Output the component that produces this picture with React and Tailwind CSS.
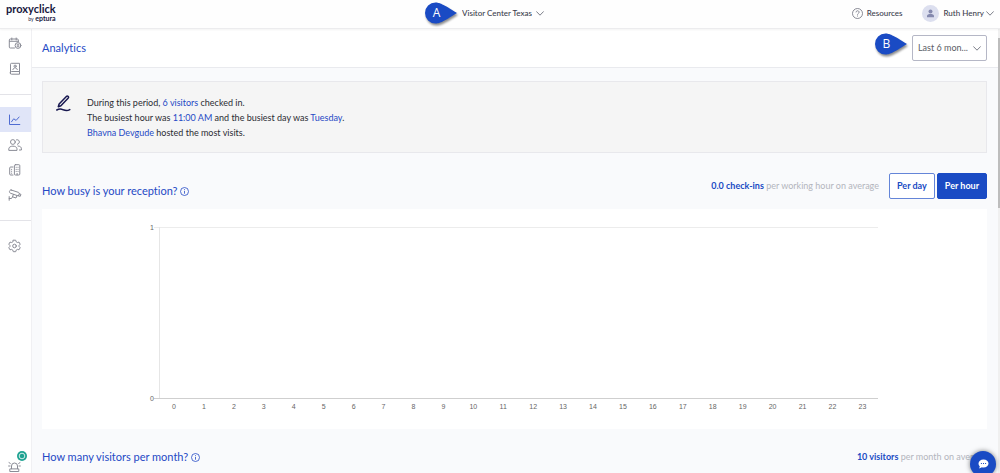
import React, { useState } from 'react';

const hours = Array.from({ length: 24 }, (_, i) => i);

const navIcon = 'w-[14px] h-[14px]';
const line = { fill: 'none', stroke: 'currentColor', strokeWidth: 1, strokeLinecap: 'round', strokeLinejoin: 'round' };

// Sidebar icons, all drawn on a 14px grid
const LogbookIcon = () => (
  <svg className={navIcon} viewBox="0 0 14 14" {...line}>
    <path d="M6.500 11H2.300a1 1 0 0 1-1-1V3a1 1 0 0 1 1-1h7a1 1 0 0 1 1 1v1.500M1.500 4.300h9M3.800 1v2M8.200 1v2" />
    <circle cx="10" cy="8.500" r="2.900" />
    <path d="M10 7v3M9 7.800h2M9 9.300h2" strokeWidth=".8" />
  </svg>
);

const ContactsIcon = () => (
  <svg className={navIcon} viewBox="0 0 14 14" {...line}>
    <path d="M2.500 11.500V2.300a1 1 0 0 1 1-1h8v8.200h-8a1.200 1.200 0 0 0 0 2.700h8V9.500" />
    <circle cx="7.100" cy="4.200" r="1.100" />
    <path d="M4.900 7.600c.2-2.400 4.200-2.400 4.400 0" />
  </svg>
);

const AnalyticsIcon = () => (
  <svg className={navIcon} viewBox="0 0 14 14" {...line}>
    <path d="M1.500 2v9.500h10.300M3.500 8.800l2.200-3 2.400 1.600 3-3.400" />
  </svg>
);

const PeopleIcon = () => (
  <svg className={navIcon} viewBox="0 0 14 14" {...line}>
    <circle cx="4.900" cy="4" r="2.400" />
    <path d="M.8 12v-1.200c0-3.500 8.200-3.500 8.200 0V12zM8.500 1.800c3.200-.9 4.200 3.700.9 4.500M10 8c2.300.1 3.400 1.200 3.400 2.800V12h-2" />
  </svg>
);

const CompanyIcon = () => (
  <svg className={navIcon} viewBox="0 0 14 14" {...line}>
    <path d="M5 4H2.700a1 1 0 0 0-1 1v6a1 1 0 0 0 1 1H5M7.400 1.700h3.400a1 1 0 0 1 1 1V11a1 1 0 0 1-1 1H7.400a1 1 0 0 1-1-1V2.700a1 1 0 0 1 1-1z" />
    <path d="M3.600 6.300v.2M3.600 8.200v.2M3.600 10.100v.2M8.200 4.200v.2M10 4.200v.2M8.200 6.300v.2M10 6.300v.2M8.200 8.300v.2M10 8.300v.2M9.100 10.400v1.400" />
  </svg>
);

const CameraIcon = () => (
  <svg className={navIcon} viewBox="0 0 14 14" {...line}>
    <path d="M3.200 2l7.300 2.400c.8.300 1 .9.700 1.600l-.8 2-8-2.800C.7 4.500 1.400 1.500 3.200 2z" />
    <path d="M11.300 5.800l1.700.6-.8 2-1.700-.6M5.500 6.400L4.400 8.800l3.600 1.200 1-2.400M4.600 8.700L3.500 10.500H1.200M1.200 8.600v3.700" />
  </svg>
);

const SettingsIcon = () => (
  <svg className={navIcon} viewBox="0 0 14 14" {...line}>
    <path d="M5.300 1.200h2.400l.5 1.600 1.200.7 1.600-.4 1.200 2.100-1.100 1.200v1.100l1.100 1.200-1.200 2.100-1.600-.4-1.200.7-.5 1.600H5.300l-.5-1.600-1.200-.7-1.600.4L.8 8.700l1.100-1.200V6.400L.8 5.200 2 3.100l1.600.4 1.200-.7z" />
    <circle cx="6.500" cy="7" r="1.800" />
  </svg>
);

const AlarmIcon = () => (
  <svg className={navIcon} viewBox="0 0 14 14" {...line}>
    <path d="M3.500 9.700V7a3 3 0 0 1 6 0v2.700M2.200 9.900h8.600v2.600H2.200zM1 3.600l1.300.8M12 3.600l-1.300.8M.6 7H2M11 7h1.400" />
  </svg>
);

const navGroups = [
  [
    { name: 'Logbook', Icon: LogbookIcon },
    { name: 'Contacts', Icon: ContactsIcon },
  ],
  [
    { name: 'Analytics', Icon: AnalyticsIcon, active: true },
    { name: 'People', Icon: PeopleIcon },
    { name: 'Company', Icon: CompanyIcon },
    { name: 'Devices', Icon: CameraIcon },
  ],
  [{ name: 'Settings', Icon: SettingsIcon }],
];

const Chevron = ({ className }) => (
  <svg className={className} width="8" height="5" viewBox="0 0 8 5" fill="none" stroke="#6d6f7c" strokeWidth=".9" strokeLinecap="round" strokeLinejoin="round">
    <path d="M.6.700L4 4.200 7.400.7" />
  </svg>
);

const InfoIcon = () => (
  <svg className="w-[9px] h-[9px] mt-px shrink-0" viewBox="0 0 9 9" fill="none" stroke="#2549c5" strokeWidth=".8">
    <circle cx="4.500" cy="4.500" r="4" />
    <path d="M4.500 4v2.700M4.500 2.200v1" />
  </svg>
);

// Teardrop callout pointing to the right
const Marker = ({ letter }) => (
  <div className="relative w-[34px] h-[24px]">
    <svg className="absolute inset-0 overflow-visible drop-shadow-[1px_2px_1px_rgba(0,0,0,0.45)]" width="34" height="24" viewBox="0 0 34 24">
      <path d="M11.500 1.500C15 1.500 19 3 33 12 19 21 15 22.500 11.500 22.500a10.500 10.500 0 0 1 0-21z" fill="#1a4bc4" />
    </svg>
    <span className="absolute inset-y-0 left-0 w-[25px] flex items-center justify-center text-white text-[12px] leading-none font-['Open_Sans',sans-serif]">{letter}</span>
  </div>
);

const Header = () => (
  <header className="relative z-10 h-[29px] shrink-0 grid grid-cols-[1fr_auto_1fr] items-center pl-[6px] pb-[2px] bg-[#fefefe] border-b border-[#ececee] shadow-[0_1px_2px_rgba(0,0,0,0.05)]">
    <a href="#home" aria-label="proxyclick by eptura" className="justify-self-start flex flex-col items-end text-[#17173d]">
      <span className="text-[11px] leading-[10px] font-bold">proxyclick</span>
      <span className="text-[7px] leading-[8px] font-bold"><span className="text-[5px] font-normal">by</span> eptura</span>
    </a>
    <div className="relative flex items-center text-[#3b3d4d]">
      <div className="absolute right-full top-1/2 -translate-y-1/2 mr-1">
        <Marker letter="A" />
      </div>
      <select aria-label="Location" className="appearance-none w-[82px] pr-3 text-[8px] leading-4 font-medium bg-transparent outline-none">
        <option>Visitor Center Texas</option>
      </select>
      <Chevron className="absolute right-0 pointer-events-none" />
    </div>
    <div className="justify-self-end flex items-center gap-5 pr-[6px] text-[8px] leading-4 font-medium text-[#3b3d4d]">
      <a href="#resources" className="flex items-center gap-1">
        <svg className="w-[11px] h-[11px]" viewBox="0 0 11 11" fill="none" stroke="#6d6f7c" strokeWidth=".8">
          <circle cx="5.500" cy="5.500" r="5" />
          <path d="M4 4.400c0-2.200 3.200-2.100 3.100-.1 0 1.100-1.600 1.200-1.600 2.400M5.500 7.500v1" />
        </svg>
        Resources
      </a>
      <button className="flex items-center">
        <svg className="w-[17px] h-[17px] mr-1" viewBox="0 0 17 17">
          <circle cx="8.500" cy="8.500" r="8.500" fill="#dcdfef" />
          <circle cx="8.500" cy="6.500" r="2" fill="#8489ae" />
          <path d="M5 12.200V11c0-2.600 7-2.600 7 0v1.200z" fill="#8489ae" />
        </svg>
        Ruth Henry
        <Chevron className="ml-[2px]" />
      </button>
    </div>
  </header>
);

const Sidebar = () => (
  <nav aria-label="Main" className="w-8 shrink-0 flex flex-col pt-[2px] bg-white border-r border-[#f0f0f3] text-[#8a8c96]">
    {navGroups.map((group, i) => (
      <ul key={i} className={i > 0 ? 'pt-3 pb-[13px] border-t border-[#e3e3e8]' : 'pb-[13px]'}>
        {group.map(({ name, Icon, active }) => (
          <li key={name}>
            <a
              href={`#${name.toLowerCase()}`}
              aria-label={name}
              className={`flex h-[25px] pl-2 items-center ${active ? 'bg-[#e0e5f8] text-[#4f6cd2]' : ''}`}
            >
              <Icon />
            </a>
          </li>
        ))}
      </ul>
    ))}
    <a href="#alerts" aria-label="Alerts" className="relative mt-auto pl-2">
      <AlarmIcon />
      <svg className="absolute left-[17px] bottom-[12px] w-[10px] h-[10px]" viewBox="0 0 10 10">
        <circle cx="5" cy="5" r="5" fill="#1fa392" />
        <circle cx="5" cy="5" r="2.800" fill="none" stroke="#fff" strokeWidth=".8" />
      </svg>
    </a>
  </nav>
);

const ReceptionChart = () => (
  <svg className="block w-full bg-white font-['Liberation_Sans',sans-serif]" viewBox="0 0 945 220" fontSize="7" fill="#666" role="img" aria-label="Check-ins per hour">
    <path d="M112 18.500h724" stroke="#ececec" />
    <path d="M117.500 18v171" stroke="#e6e6e6" />
    <path d="M112 189.500h724" stroke="#cfcfcf" />
    <text x="112" y="21" textAnchor="end">1</text>
    <text x="112" y="192" textAnchor="end">0</text>
    {hours.map(h => (
      <text key={h} x={132 + h * 29.93} y="200" textAnchor="middle">{h}</text>
    ))}
  </svg>
);

const App = () => {
  const [view, setView] = useState('hour');

  const toggleBase = 'h-[26px] px-[7px] rounded-[2px] border text-[9px] leading-4 font-bold';
  const toggleOn = 'border-[#1a4bc4] bg-[#1a4bc4] text-white';
  const toggleOff = 'border-[#6485d8] bg-white text-[#1a4bc4]';
  const titleClass = 'flex items-center gap-[3px] text-[11px] leading-4 text-[#2549c5]';
  const linkClass = 'text-[#2549c5]';

  return (
    <div className="relative h-screen flex flex-col overflow-hidden bg-[#f9fafc] font-['Lato',sans-serif] [font-variant-ligatures:none] text-[#2b2c33]">
      <Header />
      <div className="flex flex-1 min-h-0">
        <Sidebar />
        <main className="flex-1 min-w-0 overflow-hidden">
          {/* Page title and period filter */}
          <div className="h-[39px] flex items-center justify-between pl-[10px] pr-[13px] bg-white border-b border-[#e9eaee]">
            <h1 className="text-[11px] leading-4 text-[#2549c5]">Analytics</h1>
            <div className="relative flex items-center">
              <div className="absolute right-full top-1/2 -translate-y-1/2 mr-1 -mt-1">
                <Marker letter="B" />
              </div>
              <select aria-label="Period" className="appearance-none w-[75px] h-[26px] pl-[5px] pr-4 rounded-[2px] border border-[#b5b7c6] bg-white text-[9px] leading-4 text-[#5b5d66]">
                <option>Last 6 mon...</option>
              </select>
              <Chevron className="absolute right-[6px] pointer-events-none" />
            </div>
          </div>

          <div className="pl-[10px] pr-[13px] pt-[13px]">
            {/* Summary */}
            <section className="flex h-[72px] pl-[12px] pt-[13px] border border-[#e8e8ec] bg-[#f5f5f5]">
              <svg className="w-[18px] h-[18px] mr-[14px] shrink-0" viewBox="0 0 18 18" fill="none" stroke="#17174f" strokeWidth="1.500" strokeLinecap="round" strokeLinejoin="round">
                <path d="M3.300 11.800l.8-2.800 7.500-7.700c.8-.8 2.500.6 1.700 1.600L5.900 10.700z" />
                <path d="M1.800 15c2.600-1.600 4.500-1.200 6.500-.2 2.200 1 4.500 1 6.500-.2" />
              </svg>
              <div className="text-[9px] leading-[15px]">
                <p>During this period, <a href="#visitors" className={linkClass}>6 visitors</a> checked in.</p>
                <p>The busiest hour was <span className={linkClass}>11:00 AM</span> and the busiest day was <span className={linkClass}>Tuesday</span>.</p>
                <p><a href="#host" className={linkClass}>Bhavna Devgude</a> hosted the most visits.</p>
              </div>
            </section>

            {/* Check-ins */}
            <section className="pt-5">
              <div className="flex items-center justify-between h-[26px] mb-[10px]">
                <h2 className={`${titleClass} pt-[10px]`}>How busy is your reception? <InfoIcon /></h2>
                <div className="flex items-center text-[9px] leading-4">
                  <p className="mr-[10px] text-[#b3b5bd]"><strong className="font-bold text-[#1a4bc4]">0.0 check-ins</strong> per working hour on average</p>
                  <div className="flex gap-[2px]">
                    <button className={`${toggleBase} ${view === 'day' ? toggleOn : toggleOff}`} onClick={() => setView('day')} aria-pressed={view === 'day'}>Per day</button>
                    <button className={`${toggleBase} ${view === 'hour' ? toggleOn : toggleOff}`} onClick={() => setView('hour')} aria-pressed={view === 'hour'}>Per hour</button>
                  </div>
                </div>
              </div>
              <ReceptionChart />
            </section>

            {/* Visitors per month */}
            <section className="flex items-center justify-between pt-5">
              <h2 className={titleClass}>How many visitors per month? <InfoIcon /></h2>
              <p className="text-[9px] leading-4 text-[#b3b5bd]"><strong className="font-bold text-[#1a4bc4]">10 visitors</strong> per month on average</p>
            </section>
          </div>
        </main>
      </div>

      {/* Scrollbar */}
      <div className="absolute right-0 top-[29px] bottom-0 w-[2px] pt-[9px] bg-[#f0f0f0]">
        <div className="h-[170px] bg-[#bdbdbd]" />
      </div>

      <button aria-label="Open chat" className="absolute right-1 -bottom-1 w-[26px] h-[26px] rounded-full bg-[#1a4bc4] shadow-[0_0_5px_rgba(0,0,0,0.5)] flex items-center justify-center">
        <svg width="11" height="10" viewBox="0 0 11 10">
          <path d="M5.500.5c3 0 5 1.700 5 4s-2 4-5 4c-.6 0-1.100-.1-1.600-.2L1.200 9.500l.6-2.300C1 6.500.5 5.600.5 4.500c0-2.300 2-4 5-4z" fill="#fff" />
          <path d="M2.900 4.500h1M5 4.500h1M7.100 4.500h1" stroke="#1a4bc4" strokeWidth="1" />
        </svg>
      </button>
    </div>
  );
};

export default App;
